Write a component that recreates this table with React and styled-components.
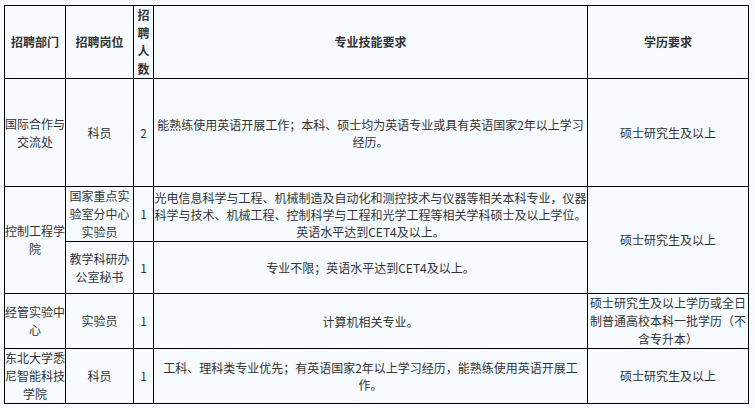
import React from "react";
import styled, { createGlobalStyle } from "styled-components";

const Global = createGlobalStyle`
  html, body {
    margin: 0;
    padding: 0;
    background: #f7fbff;
  }
  body {
    font-family: "Microsoft YaHei", "Noto Sans CJK SC", "Noto Sans", sans-serif;
    font-size: 12px;
    color: #333;
  }
`;

const Page = styled.div`
  padding: 5px 0 0 4px;
  background: #f7fbff;
  min-height: 408px;
  box-sizing: border-box;
`;

const Table = styled.table`
  border-collapse: collapse;
  table-layout: fixed;
  width: 744px;
  background: #f7fbff;
`;

const Row = styled.tr`
  height: ${(p) => p.$h}px;
`;

const Cell = styled.td`
  border: 1px solid #000;
  padding: 0;
  text-align: center;
  vertical-align: middle;
  line-height: 18px;
  font-size: 12px;
  color: #333;
  font-weight: ${(p) => (p.$head ? 700 : 400)};
  word-break: break-all;
`;

const Desc = styled(Cell)`
  line-height: 17px;
  word-break: normal;
  line-break: strict;
`;

export default function App() {
  return (
    <>
      <Global />
      <Page>
        <Table>
          <colgroup>
            <col style={{ width: 61 }} />
            <col style={{ width: 68 }} />
            <col style={{ width: 20 }} />
            <col style={{ width: 434 }} />
            <col style={{ width: 161 }} />
          </colgroup>
          <tbody>
            <Row $h={73}>
              <Cell as="th" $head>招聘部门</Cell>
              <Cell as="th" $head>招聘岗位</Cell>
              <Cell as="th" $head>招聘人数</Cell>
              <Cell as="th" $head>专业技能要求</Cell>
              <Cell as="th" $head>学历要求</Cell>
            </Row>
            <Row $h={108}>
              <Cell>国际合作与交流处</Cell>
              <Cell>科员</Cell>
              <Cell>2</Cell>
              <Desc>能熟练使用英语开展工作；本科、硕士均为英语专业或具有英语国家2年以上学习经历。</Desc>
              <Cell>硕士研究生及以上</Cell>
            </Row>
            <Row $h={55}>
              <Cell rowSpan={2}>控制工程学院</Cell>
              <Cell>国家重点实验室分中心实验员</Cell>
              <Cell>1</Cell>
              <Desc>光电信息科学与工程、机械制造及自动化和测控技术与仪器等相关本科专业，仪器科学与技术、机械工程、控制科学与工程和光学工程等相关学科硕士及以上学位。英语水平达到CET4及以上。</Desc>
              <Cell rowSpan={2}>硕士研究生及以上</Cell>
            </Row>
            <Row $h={52}>
              <Cell>教学科研办公室秘书</Cell>
              <Cell>1</Cell>
              <Desc>专业不限；英语水平达到CET4及以上。</Desc>
            </Row>
            <Row $h={55}>
              <Cell>经管实验中心</Cell>
              <Cell>实验员</Cell>
              <Cell>1</Cell>
              <Desc>计算机相关专业。</Desc>
              <Cell>硕士研究生及以上学历或全日制普通高校本科一批学历（不含专升本）</Cell>
            </Row>
            <Row $h={55}>
              <Cell>东北大学悉尼智能科技学院</Cell>
              <Cell>科员</Cell>
              <Cell>1</Cell>
              <Desc>工科、理科类专业优先；有英语国家2年以上学习经历，能熟练使用英语开展工作。</Desc>
              <Cell>硕士研究生及以上</Cell>
            </Row>
          </tbody>
        </Table>
      </Page>
    </>
  );
}
